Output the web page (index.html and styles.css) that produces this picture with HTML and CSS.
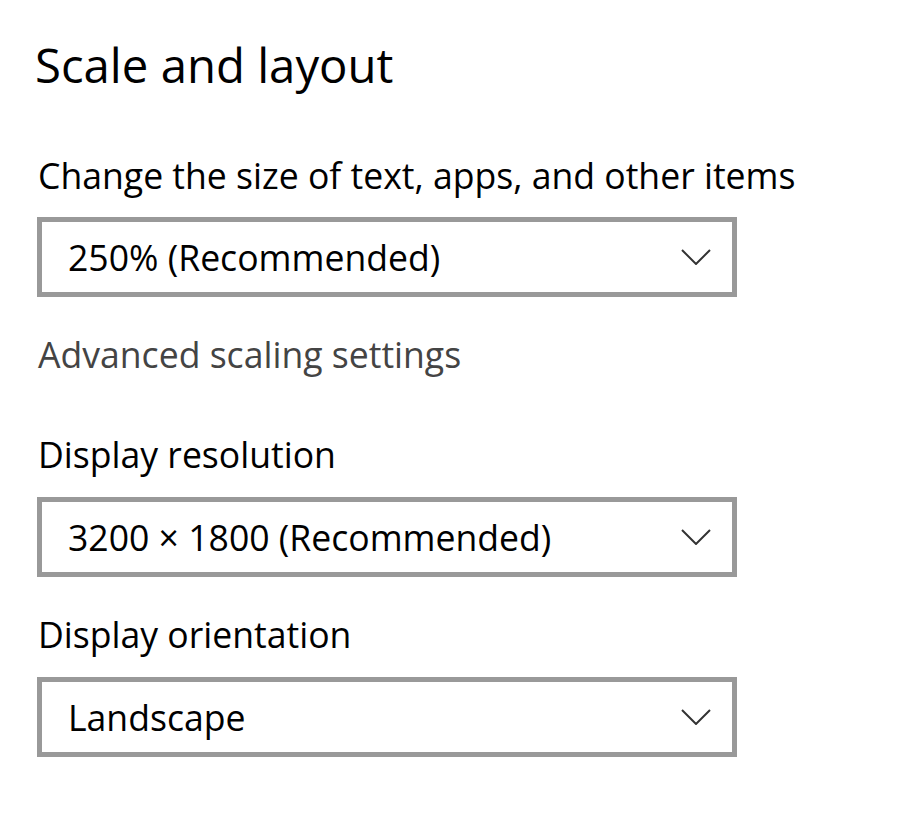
FILE: index.html
```html
<!DOCTYPE html>
<html>
<head>
<meta charset="utf-8">
<link rel="stylesheet" href="styles.css">
</head>
<body>
<div class="page">
  <h1 class="title">Scale and layout</h1>
  <div class="label first">Change the size of text, apps, and other items</div>
  <div class="select"><span class="value">250% (Recommended)</span><svg class="chev" width="30" height="16" viewBox="0 0 30 16"><path d="M1 1 L15 15 L29 1" fill="none" stroke="#333" stroke-width="2"/></svg></div>
  <div class="link">Advanced scaling settings</div>
  <div class="label res">Display resolution</div>
  <div class="select"><span class="value">3200 × 1800 (Recommended)</span><svg class="chev" width="30" height="16" viewBox="0 0 30 16"><path d="M1 1 L15 15 L29 1" fill="none" stroke="#333" stroke-width="2"/></svg></div>
  <div class="label">Display orientation</div>
  <div class="select"><span class="value">Landscape</span><svg class="chev" width="30" height="16" viewBox="0 0 30 16"><path d="M1 1 L15 15 L29 1" fill="none" stroke="#333" stroke-width="2"/></svg></div>
</div>
</body>
</html>
```

FILE: styles.css
```css
html, body { margin: 0; padding: 0; background: #fff; }
body { font-family: "Open Sans", "Noto Sans", sans-serif; color: #000; }
.page { padding: 0 0 0 37px; display: flex; flex-direction: column; align-items: flex-start; }
.title { margin: 35px 0 0 -2px; font-weight: 400; font-size: 47.3px; line-height: 60px; }
.label { font-size: 35.6px; line-height: 48px; margin: 33px 0 19px 1px; }
.label.first { margin-top: 56px; margin-bottom: 18px; }
.label.res { margin-top: 52px; }
.select { box-sizing: border-box; width: 700px; height: 80px; border: 5px solid #999; display: flex; align-items: center; justify-content: space-between; padding: 0 21px 1px 26px; }
.value { font-size: 35.6px; line-height: 48px; }
.chev { display: block; margin-top: 1px; }
.link { font-size: 35.6px; line-height: 48px; color: #444; margin: 33px 0 0 1px; }
```
